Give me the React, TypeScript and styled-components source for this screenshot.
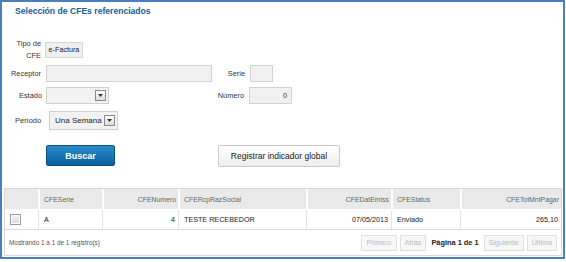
import React, { FC } from "react";
import styled, { createGlobalStyle } from "styled-components";

const GlobalStyle = createGlobalStyle`
  html, body {
    margin: 0;
    padding: 0;
    background: #ffffff;
  }
  body {
    font-family: "Liberation Sans", Arial, sans-serif;
    color: #333333;
  }
`;

const Panel = styled.div`
  box-sizing: border-box;
  width: 565px;
  height: 259px;
  border: 2px solid #4a7ebf;
  display: flex;
  flex-direction: column;
`;

const Title = styled.h1`
  margin: 0;
  padding: 3px 0 0 13px;
  height: 15px;
  font-size: 8.6px;
  font-weight: bold;
  color: #1d5b94;
  line-height: 12px;
`;

const Form = styled.div`
  display: flex;
  flex-direction: column;
  padding-top: 18px;
`;

const Row = styled.div<{ $h: number; $mb: number }>`
  display: flex;
  align-items: center;
  height: ${(p) => p.$h}px;
  margin-bottom: ${(p) => p.$mb}px;
`;

const Label = styled.div<{ $w: number }>`
  width: ${(p) => p.$w}px;
  flex: none;
  text-align: right;
  font-size: 7.4px;
  line-height: 12px;
  color: #333;
`;

const Gap = styled.div<{ $w: number }>`
  width: ${(p) => p.$w}px;
  flex: none;
`;

const Field = styled.div<{ $w: number; $h?: number }>`
  box-sizing: border-box;
  width: ${(p) => p.$w}px;
  height: ${(p) => p.$h ?? 17}px;
  flex: none;
  background: #f1f1f1;
  border: 1px solid #d3d3d3;
  font-size: 7.4px;
  display: flex;
  align-items: center;
  justify-content: flex-end;
  padding: 0 4px;
  color: #333;
`;

const TipoButton = styled.div`
  box-sizing: border-box;
  width: 38px;
  height: 16px;
  background: #efefef;
  border: 1px solid #d6d6d6;
  font-size: 7.2px;
  display: flex;
  align-items: center;
  justify-content: center;
  color: #222;
`;

const Select = styled.div<{ $w: number; $h: number }>`
  box-sizing: border-box;
  width: ${(p) => p.$w}px;
  height: ${(p) => p.$h}px;
  flex: none;
  background: #f2f2f2;
  border: 1px solid #d0d0d0;
  display: flex;
  align-items: center;
  justify-content: space-between;
  padding: 0 2px 0 5px;
  font-size: 8px;
  color: #222;
`;

const Arrow = styled.div`
  box-sizing: border-box;
  width: 11px;
  height: 11px;
  border: 1px solid #8c8c8c;
  background: linear-gradient(#ffffff, #dcdcdc);
  display: flex;
  align-items: center;
  justify-content: center;
`;

const Actions = styled.div`
  display: flex;
  align-items: flex-start;
  margin-top: 15px;
  padding-left: 44px;
  height: 22px;
`;

const Primary = styled.button`
  box-sizing: border-box;
  width: 69px;
  height: 21px;
  border: 1px solid #0d4f7e;
  border-radius: 2px;
  background: linear-gradient(#2b8ccb, #0a5f9c);
  color: #fff;
  font-family: "Liberation Sans", Arial, sans-serif;
  font-weight: bold;
  font-size: 9px;
  padding: 0;
`;

const Secondary = styled.button`
  box-sizing: border-box;
  margin-left: 103px;
  width: 122px;
  height: 22px;
  border: 1px solid #c9c9c9;
  border-radius: 2px;
  background: linear-gradient(#ffffff, #eeeeee);
  color: #222;
  font-family: "Liberation Sans", Arial, sans-serif;
  font-size: 8.5px;
  padding: 0;
`;

const Table = styled.div`
  box-sizing: border-box;
  margin: 21px 0 0 2px;
  width: 558px;
  border: 1px solid #d9d9d9;
`;

const cols = "33px 64px 76px 128px 85px 69px 1fr";

const HeadRow = styled.div`
  display: grid;
  grid-template-columns: ${cols};
  height: 20px;
  background: #e9e9e9;
  border-bottom: 1px solid #ffffff;
`;

const HeadCell = styled.div<{ $right?: boolean }>`
  display: flex;
  align-items: center;
  justify-content: ${(p) => (p.$right ? "flex-end" : "flex-start")};
  padding: 0 2px 0 4px;
  font-size: 6.9px;
  color: #666;
  border-left: 2px solid #ffffff;
  &:first-child {
    border-left: none;
  }
`;

const DataRow = styled.div`
  display: grid;
  grid-template-columns: ${cols};
  height: 19px;
  border-bottom: 1px solid #dcdcdc;
`;

const DataCell = styled.div<{ $right?: boolean }>`
  display: flex;
  align-items: center;
  justify-content: ${(p) => (p.$right ? "flex-end" : "flex-start")};
  padding: 0 3px 0 5px;
  font-size: 7.2px;
  color: #1a1a1a;
  border-left: 1px solid #e3e3e3;
  &:first-child {
    border-left: none;
  }
`;

const Check = styled.div`
  box-sizing: border-box;
  width: 11px;
  height: 11px;
  border: 1px solid #9a9a9a;
  background: linear-gradient(#f4f4f4, #d8d8d8);
  box-shadow: inset 0 0 0 1px #ffffff;
`;

const Footer = styled.div`
  display: flex;
  align-items: center;
  justify-content: space-between;
  height: 25px;
  padding: 0 4px 0 4px;
`;

const Info = styled.div`
  font-size: 6.4px;
  color: #555;
`;

const Pager = styled.div`
  display: flex;
  align-items: center;
  gap: 3px;
`;

const PageButton = styled.div`
  box-sizing: border-box;
  height: 16px;
  padding: 0 4px;
  border: 1px solid #e0e0e0;
  background: #f7f7f7;
  color: #bdbdbd;
  font-size: 7.2px;
  display: flex;
  align-items: center;
`;

const PageText = styled.div`
  font-size: 7.4px;
  font-weight: bold;
  color: #222;
  padding: 0 2px;
`;

const DownArrow: FC = () => (
  <Arrow>
    <svg width="5" height="3" viewBox="0 0 5 3">
      <path d="M0 0h5L2.5 3z" fill="#333" />
    </svg>
  </Arrow>
);

const columns = [
  { name: "", right: false },
  { name: "CFESerie", right: false },
  { name: "CFENumero", right: true },
  { name: "CFERcpRazSocial", right: false },
  { name: "CFEDatEmiss", right: true },
  { name: "CFEStatus", right: false },
  { name: "CFETotMntPagar", right: true },
];

const row = ["A", "4", "TESTE RECEBEDOR", "07/05/2013", "Enviado", "265,10"];

const App: FC = () => {
  return (
    <>
      <GlobalStyle />
      <Panel>
        <Title>Selección de CFEs referenciados</Title>
        <Form>
          <Row $h={23} $mb={4}>
            <Label $w={39}>
              Tipo de
              <br />
              CFE
            </Label>
            <Gap $w={4} />
            <TipoButton>e-Factura</TipoButton>
          </Row>
          <Row $h={17} $mb={5}>
            <Label $w={39}>Receptor</Label>
            <Gap $w={5} />
            <Field $w={166} />
            <Label $w={33}>Serie</Label>
            <Gap $w={5} />
            <Field $w={23} />
          </Row>
          <Row $h={17} $mb={7}>
            <Label $w={40}>Estado</Label>
            <Gap $w={4} />
            <Select $w={63} $h={17}>
              <span />
              <DownArrow />
            </Select>
            <Label $w={135}>Número</Label>
            <Gap $w={5} />
            <Field $w={43}>0</Field>
          </Row>
          <Row $h={19} $mb={0}>
            <Label $w={39}>Período</Label>
            <Gap $w={8} />
            <Select $w={69} $h={19}>
              <span>Una Semana</span>
              <DownArrow />
            </Select>
          </Row>
        </Form>
        <Actions>
          <Primary>Buscar</Primary>
          <Secondary>Registrar indicador global</Secondary>
        </Actions>
        <Table>
          <HeadRow>
            {columns.map((c, i) => (
              <HeadCell key={i} $right={c.right}>
                {c.name}
              </HeadCell>
            ))}
          </HeadRow>
          <DataRow>
            <DataCell>
              <Check />
            </DataCell>
            {row.map((v, i) => (
              <DataCell key={i} $right={columns[i + 1].right}>
                {v}
              </DataCell>
            ))}
          </DataRow>
          <Footer>
            <Info>Mostrando 1 a 1 de 1 registro(s)</Info>
            <Pager>
              <PageButton>Primero</PageButton>
              <PageButton>Atrás</PageButton>
              <PageText>Página 1 de 1</PageText>
              <PageButton>Siguiente</PageButton>
              <PageButton>Última</PageButton>
            </Pager>
          </Footer>
        </Table>
      </Panel>
    </>
  );
};

export default App;
